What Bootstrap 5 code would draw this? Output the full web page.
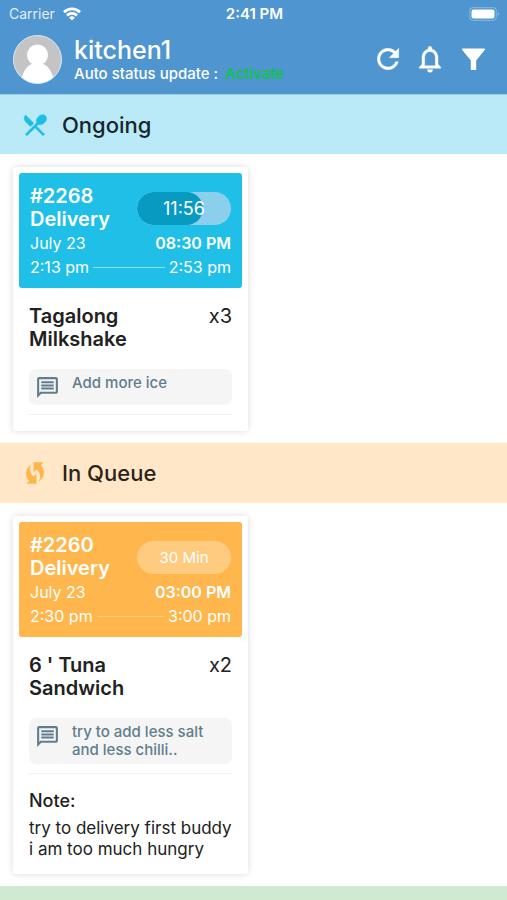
<!DOCTYPE html>
<html lang="en">
<head>
<meta charset="utf-8">
<meta name="viewport" content="width=device-width, initial-scale=1">
<title>Kitchen orders</title>
<link href="https://cdn.jsdelivr.net/npm/bootstrap@5.3.0/dist/css/bootstrap.min.css" rel="stylesheet">
<style>
body{font-family:Inter,"Liberation Sans",sans-serif;color:#212121;background:#fff;font-size:16px}
.topbar{background:#4f95cf;color:#fff}
.statusbar{font-size:14px;line-height:28px;display:grid;grid-template-columns:1fr auto 1fr;padding:0 7px 0 9px}
.carrier{color:#e3eef8}
.clock{font-size:15px}
.profile{padding:6px 17px 10px 12px}
.avatar{width:50px;height:50px}
.kitchen{font-size:25px;line-height:27px;font-weight:500;margin:3px 0 0}
.autostat{font-size:15px;line-height:20px;font-weight:500}
.activate{color:#0cc53f;padding-left:3px}
.actions{gap:10px}
.actions .btn{line-height:0;color:#fff;border:0}
.band{padding:0 21px;height:60px;gap:13px}
.band h2{font-size:22px;line-height:28px;font-weight:500;margin:0}
.band-ongoing{background:#baeaf8;color:#1dbde6;border-top:1px solid #9dcfe9}
.band-queue{background:#ffe7c8;color:#ffb54a}
.band-done{background:#d0e9d1;min-height:13px}
.band h2{color:#16252b}
.band-queue h2{color:#2b241b}
.orders{padding:13px 12px 12px 13px}
.order{width:235px;border:0;border-radius:3px;padding:6px;box-shadow:0 0 7px rgba(0,0,0,.14)}
.ticket{border-radius:3px;padding:12px 11px 9px;color:#fff}
.ticket-blue{background:#1fbfe8}
.ticket-amber{background:#ffb64c}
.ticket h3,.dish h3{font-size:20px;line-height:23px;font-weight:600;margin:0}
.times{line-height:24px;font-size:16px}
.rule{height:1px;background:currentColor;opacity:.5;margin:0 4px}
.ticket-amber .rule{opacity:.3}
.timer{width:94px;height:33px;border-radius:17px;margin-top:7px;background:#8bcfed;position:relative;font-size:18px}
.timer .progress-bar{background:#079bc2;border-radius:17px;height:100%}
.timer span{position:absolute;inset:0;line-height:33px;text-align:center;color:#fff}
.timer-wait{background:#ffcb80;font-size:15px}
.order-body{padding:17px 10px 10px}
.order-noted{padding-bottom:8px}
.qty{font-size:20px;line-height:23px}
.comment{background:#f5f5f5;border-radius:7px;color:#607d8b;font-size:15px;line-height:18px;font-weight:500;padding:5px 8px 5px 6px;gap:12px;margin-top:18px}
.comment p{margin:0}
.divider{border-top:1px solid #f1f1f1;margin-top:9px}
.note h4{font-size:18px;line-height:22px;font-weight:500;margin:16px 0 6px}
.note p{font-size:17px;line-height:21px;margin:0 -10px 0 0}
</style>
</head>
<body>
<div class="d-flex flex-column min-vh-100">
<header class="topbar">
  <div class="statusbar">
    <div class="carrier d-flex align-items-center gap-2"><span>Carrier</span>
      <svg width="18" height="14" viewBox="0 0 18 14" fill="none" stroke="#fff" stroke-width="2.8" aria-hidden="true"><path d="M1 5.2a11.5 11.5 0 0 1 16 0M4 8.4a7.2 7.2 0 0 1 10 0"/><path d="M9 13.6 6.1 10.7a4.2 4.2 0 0 1 5.8 0z" fill="#fff" stroke="none"/></svg>
    </div>
    <div class="clock fw-semibold">2:41 PM</div>
    <div class="d-flex align-items-center justify-content-end">
      <svg width="31" height="14" viewBox="0 0 31 14" aria-hidden="true"><rect x=".7" y=".7" width="26.6" height="12.6" rx="3.5" fill="none" stroke="#7fb2dd" stroke-width="1.2"/><rect x="2.5" y="2.5" width="23" height="9" rx="2" fill="#fff"/><path d="M28.7 5c2 .7 2 3.300 0 4z" fill="#7fb2dd"/></svg>
    </div>
  </div>
  <div class="profile d-flex align-items-center">
    <svg class="avatar flex-shrink-0" viewBox="0 0 50 50" aria-hidden="true"><defs><clipPath id="face"><circle cx="25.500" cy="25.500" r="24"/></clipPath></defs><circle cx="25.500" cy="25.500" r="24" fill="#c4c4c4"/><g clip-path="url(#face)" fill="#fff"><circle cx="25.500" cy="21" r="10.500"/><path d="M20 26h11v4c5 1 10 9 12 20H8c2-11 7-19 12-20z"/></g><circle cx="25.500" cy="25.500" r="24" fill="none" stroke="#dce9f5" stroke-width="1"/></svg>
    <div class="flex-grow-1 ps-2 ms-1">
      <h1 class="kitchen">kitchen1</h1>
      <div class="autostat">Auto status update : <span class="activate">Activate</span></div>
    </div>
    <div class="actions d-flex align-items-center">
      <button class="btn p-0" type="button" aria-label="Refresh"><svg width="32" height="32" viewBox="0 0 24 24" fill="currentColor" stroke="currentColor" stroke-width=".3"><path d="M17.65 6.35C16.2 4.9 14.21 4 12 4c-4.42 0-7.990 3.580-7.990 8s3.570 8 7.990 8c3.730 0 6.840-2.550 7.730-6h-2.080c-.82 2.330-3.040 4-5.650 4-3.310 0-6-2.690-6-6s2.690-6 6-6c1.660 0 3.140.69 4.220 1.780L13 11h7V4l-2.350 2.350z"/></svg></button>
      <button class="btn p-0" type="button" aria-label="Notifications"><svg width="32" height="32" viewBox="0 0 24 24" fill="currentColor" stroke="currentColor" stroke-width=".3"><path d="M12 22c1.100 0 2-.9 2-2h-4c0 1.100.9 2 2 2zm6-6v-5c0-3.070-1.630-5.640-4.500-6.320V4c0-.83-.67-1.500-1.500-1.500s-1.500.67-1.500 1.500v.68C7.640 5.360 6 7.920 6 11v5l-2 2v1h16v-1l-2-2zm-2 1H8v-6c0-2.480 1.510-4.500 4-4.500s4 2.020 4 4.500v6z"/></svg></button>
      <button class="btn p-0" type="button" aria-label="Filter"><svg width="34" height="32" viewBox="0 0 34 32" fill="currentColor"><path d="M6.500 5.500h22q.8.600.2 1.500l-8.500 10.500V27h-5.400v-9.500L6.300 7q-.6-.9.200-1.500z"/></svg></button>
    </div>
  </div>
</header>

<main class="d-flex flex-column flex-grow-1">
  <section>
    <div class="band band-ongoing d-flex align-items-center">
      <svg width="28" height="28" viewBox="0 0 24 24" fill="currentColor" stroke="currentColor" stroke-width=".4" aria-hidden="true"><path d="M8.100 13.340l2.830-2.830L3.910 3.500c-1.560 1.560-1.560 4.090 0 5.660l4.190 4.180zm6.780-1.810c1.530.71 3.680.21 5.270-1.380 1.910-1.910 2.280-4.650.81-6.120-1.460-1.460-4.200-1.100-6.120.81-1.590 1.590-2.090 3.740-1.380 5.270L3.700 19.870l1.410 1.410L12 14.410l6.880 6.880 1.410-1.410L13.410 13l1.470-1.470z"/></svg>
      <h2>Ongoing</h2>
    </div>
    <div class="orders">
      <article class="card order">
        <div class="ticket ticket-blue">
          <div class="d-flex justify-content-between align-items-start">
            <h3>#2268<br>Delivery</h3>
            <div class="timer overflow-hidden"><div class="progress-bar" style="width:70%"></div><span>11:56</span></div>
          </div>
          <div class="times d-flex justify-content-between"><span>July 23</span><span class="fw-semibold">08:30 PM</span></div>
          <div class="times d-flex align-items-center"><span>2:13 pm</span><span class="rule flex-grow-1"></span><span>2:53 pm</span></div>
        </div>
        <div class="order-body">
          <div class="dish d-flex justify-content-between"><h3>Tagalong<br>Milkshake</h3><span class="qty">x3</span></div>
          <div class="comment d-flex align-items-start">
            <svg class="flex-shrink-0" width="25" height="26" viewBox="0 -1 24 25" fill="currentColor" aria-hidden="true"><path fill-rule="evenodd" d="M20 2H4c-1.100 0-2 .9-2 2v18l4-4h14c1.100 0 2-.9 2-2V4c0-1.100-.9-2-2-2zm0 14H5.200L4 17.200V4h16zM6 12h12v2H6zm0-3h12v2H6zm0-3h12v2H6z"/></svg>
            <p>Add more ice</p>
          </div>
          <div class="divider"></div>
        </div>
      </article>
    </div>
  </section>

  <section>
    <div class="band band-queue d-flex align-items-center">
      <svg width="28" height="28" viewBox="0 0 24 24" fill="currentColor" stroke="currentColor" stroke-width=".4" aria-hidden="true"><path d="M16.710 5.290L19 3h-8v8l2.300-2.300c1.970 1.460 3.250 3.780 3.250 6.420 0 1.310-.32 2.540-.88 3.630 2.330-1.520 3.880-4.140 3.880-7.130 0-2.520-1.110-4.770-2.840-6.330zM7.460 8.880c0-1.310.32-2.540.88-3.630C6 6.770 4.460 9.390 4.460 12.380c0 2.520 1.100 4.770 2.840 6.330L5 21h8v-8l-2.300 2.300c-1.960-1.460-3.240-3.780-3.240-6.420z"/></svg>
      <h2>In Queue</h2>
    </div>
    <div class="orders">
      <article class="card order">
        <div class="ticket ticket-amber">
          <div class="d-flex justify-content-between align-items-start">
            <h3>#2260<br>Delivery</h3>
            <div class="timer timer-wait"><span>30 Min</span></div>
          </div>
          <div class="times d-flex justify-content-between"><span>July 23</span><span class="fw-semibold">03:00 PM</span></div>
          <div class="times d-flex align-items-center"><span>2:30 pm</span><span class="rule flex-grow-1"></span><span>3:00 pm</span></div>
        </div>
        <div class="order-body order-noted">
          <div class="dish d-flex justify-content-between"><h3>6 ' Tuna<br>Sandwich</h3><span class="qty">x2</span></div>
          <div class="comment d-flex align-items-start">
            <svg class="flex-shrink-0" width="25" height="26" viewBox="0 -1 24 25" fill="currentColor" aria-hidden="true"><path fill-rule="evenodd" d="M20 2H4c-1.100 0-2 .9-2 2v18l4-4h14c1.100 0 2-.9 2-2V4c0-1.100-.9-2-2-2zm0 14H5.200L4 17.200V4h16zM6 12h12v2H6zm0-3h12v2H6zm0-3h12v2H6z"/></svg>
            <p>try to add less salt<br>and less chilli..</p>
          </div>
          <div class="divider"></div>
          <div class="note"><h4>Note:</h4><p>try to delivery first buddy<br>i am too much hungry</p></div>
        </div>
      </article>
    </div>
  </section>
  <div class="band-done flex-grow-1"></div>
</main>
</div>
<script src="https://cdn.jsdelivr.net/npm/bootstrap@5.3.0/dist/js/bootstrap.bundle.min.js"></script>
</body>
</html>
